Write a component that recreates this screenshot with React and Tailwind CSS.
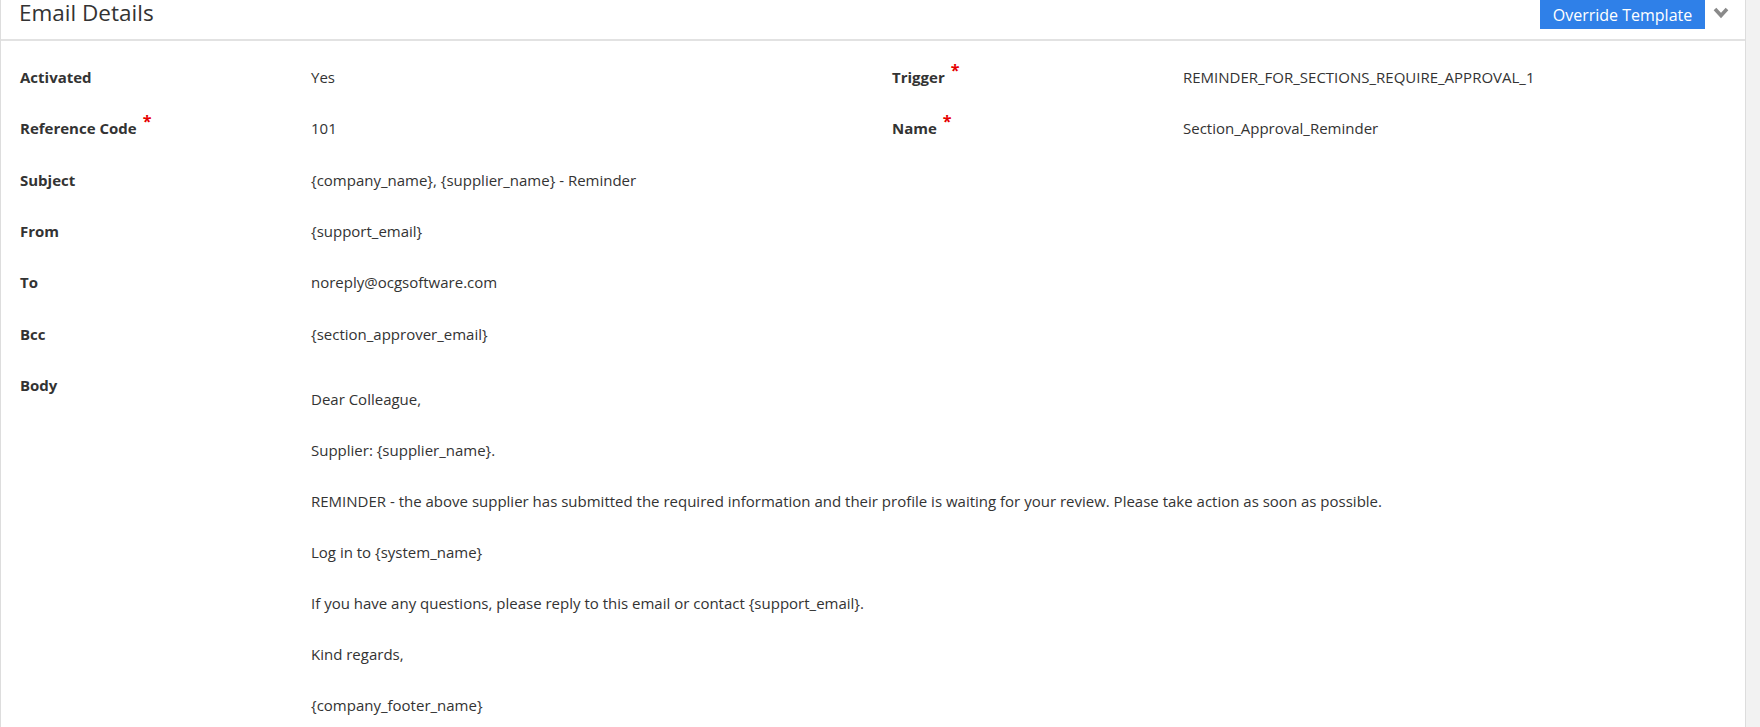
const Req = () => (
  <span className="relative -top-[7px] ml-[6px] text-[16px] font-bold text-[#e60000]">*</span>
);

const Row = ({ label, req, value, label2, req2, value2 }) => (
  <div className="flex h-[51.3px] items-center">
    <div className="w-[291px] shrink-0 font-bold text-[#333]">
      {label}
      {req && <Req />}
    </div>
    <div className="w-[581px] shrink-0 text-[#333]">{value}</div>
    {label2 && (
      <>
        <div className="w-[291px] shrink-0 font-bold text-[#333]">
          {label2}
          {req2 && <Req />}
        </div>
        <div className="text-[#333]">{value2}</div>
      </>
    )}
  </div>
);

const body = [
  "Dear Colleague,",
  "Supplier: {supplier_name}.",
  "REMINDER - the above supplier has submitted the required information and their profile is waiting for your review. Please take action as soon as possible.",
  "Log in to {system_name}",
  "If you have any questions, please reply to this email or contact {support_email}.",
  "Kind regards,",
  "{company_footer_name}",
];

export default function App() {
  return (
    <div
      className="flex h-[727px] w-[1760px] overflow-hidden bg-[#f2f2f2] text-[15px] leading-[20px]"
      style={{ fontFamily: '"Open Sans", "Liberation Sans", sans-serif' }}
    >
      <div className="w-[1746px] shrink-0 border-x border-[#dddddd] bg-white">
        <div className="flex h-[41px] items-start justify-between border-b-2 border-[#e2e2e2]">
          <h2 className="pl-[18px] text-[22.5px] leading-[26px] text-[#333]">Email Details</h2>
          <div className="flex items-start">
            <button className="h-[29px] w-[165px] bg-[#2f80e8] text-[16px] leading-[28px] text-white">
              Override Template
            </button>
            <svg className="ml-[8px] mr-[16px] mt-[7px]" width="16" height="12" viewBox="0 0 16 12">
              <path d="M2 2 L8 8.5 L14 2" fill="none" stroke="#8a8a8a" strokeWidth="3.6" />
            </svg>
          </div>
        </div>
        <div className="pl-[19px] pt-[10.5px]">
          <Row label="Activated" value="Yes" label2="Trigger" req2 value2="REMINDER_FOR_SECTIONS_REQUIRE_APPROVAL_1" />
          <Row label="Reference Code" req value="101" label2="Name" req2 value2="Section_Approval_Reminder" />
          <Row label="Subject" value="{company_name}, {supplier_name} - Reminder" />
          <Row label="From" value="{support_email}" />
          <Row label="To" value="noreply@ocgsoftware.com" />
          <Row label="Bcc" value="{section_approver_email}" />
          <div className="flex">
            <div className="w-[291px] shrink-0 pt-[15.6px] font-bold text-[#333]">Body</div>
            <div className="flex flex-col gap-[31px] pt-[29.5px] text-[#333]">
              {body.map((p, i) => (
                <p key={i}>{p}</p>
              ))}
            </div>
          </div>
        </div>
      </div>
    </div>
  );
}
